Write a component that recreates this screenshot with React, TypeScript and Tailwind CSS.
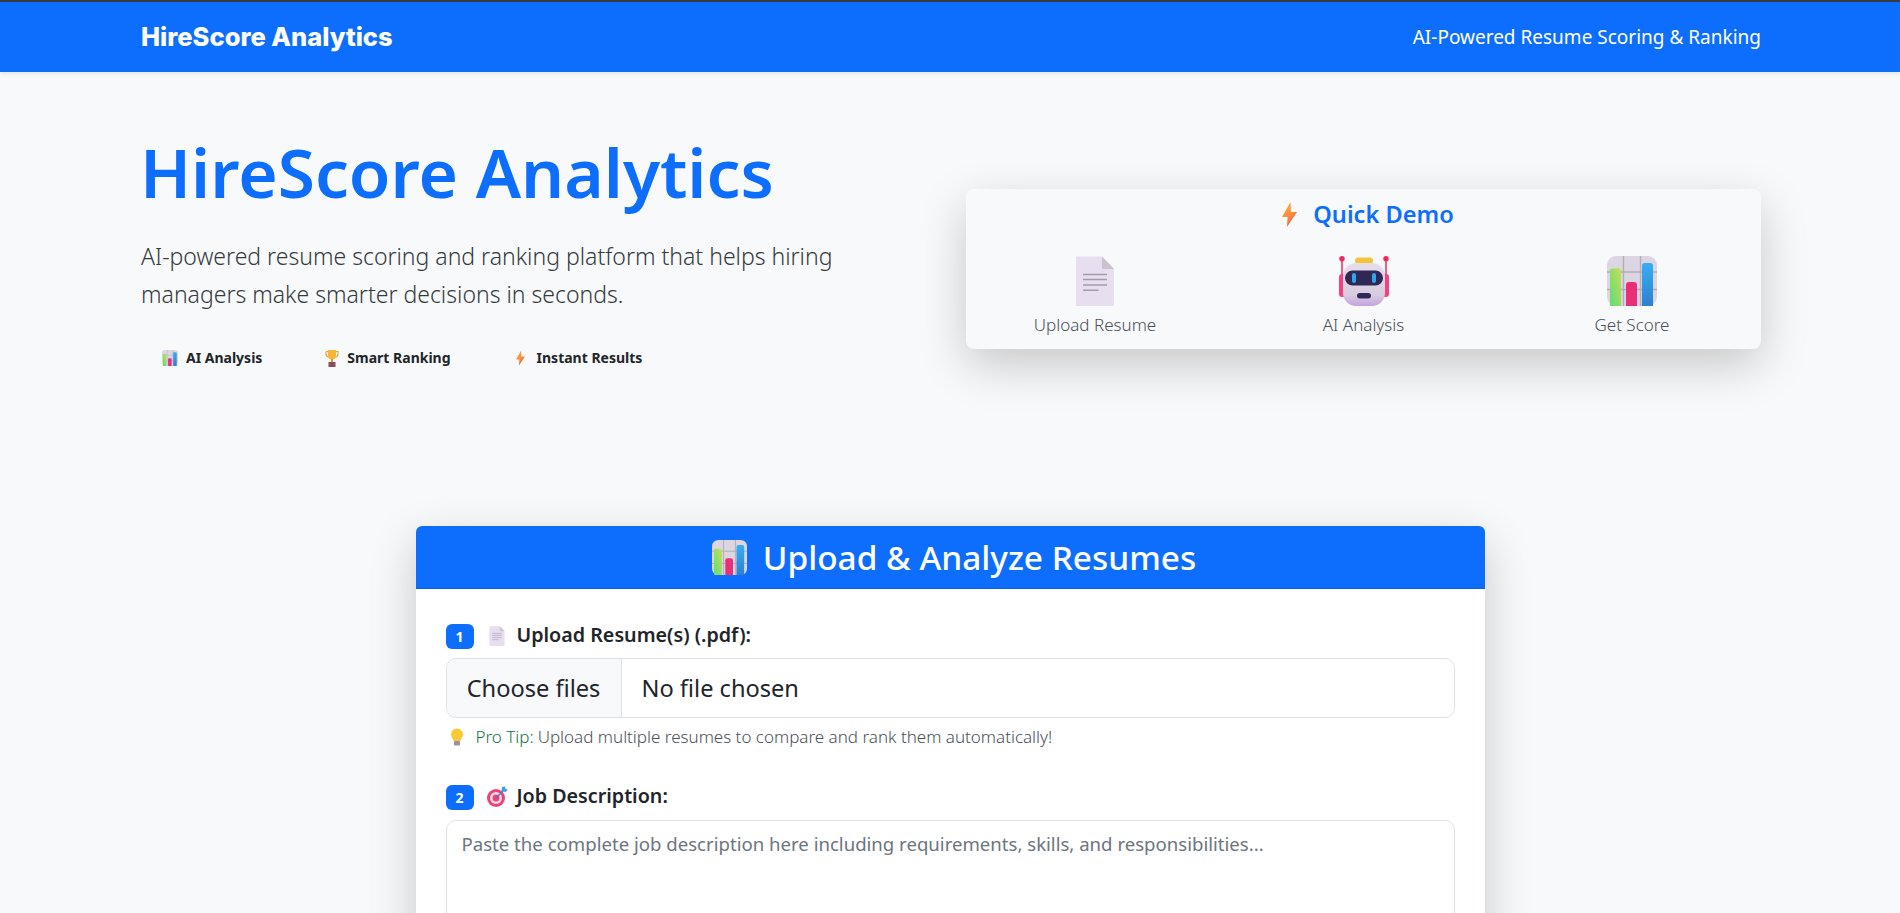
import React from "react";

const Chart = ({ s, className = "" }: { s: number; className?: string }) => (
  <svg width={s} height={s} viewBox="0 0 50 50" className={className}>
    <defs>
      <linearGradient id="cg" x1="1" y1="0" x2="0" y2="1"><stop offset="0" stopColor="#c3e052" /><stop offset="1" stopColor="#5fdc78" /></linearGradient>
      <linearGradient id="cb" x1="0" y1="0" x2="0" y2="1"><stop offset="0" stopColor="#35aef5" /><stop offset="1" stopColor="#2f7fd0" /></linearGradient>
    </defs>
    <rect width="50" height="50" rx="9" fill="#dcd6e2" />
    <path d="M16.5 0V50M33.5 0V50M0 16H50M0 33.5H50" stroke="#b3adb9" strokeWidth="1.4" />
    <path d="M3 15a2.5 2.5 0 0 1 2.5-2.5h6A2.5 2.5 0 0 1 14 15V50H3z" fill="url(#cg)" />
    <path d="M19 29a3 3 0 0 1 3-3h5a3 3 0 0 1 3 3V50H19z" fill="#e8307a" />
    <path d="M35 9.500a2.500 2.500 0 0 1 2.500-2.500h6a2.500 2.500 0 0 1 2.500 2.500V50H35z" fill="url(#cb)" />
  </svg>
);

const Doc = ({ s }: { s: number }) => (
  <svg width={s} height={s} viewBox="0 0 50 50">
    <path d="M6 .5H32L44 13V49a1 1 0 0 1-1 1H7a1 1 0 0 1-1-1z" fill="#e7deef" />
    <path d="M32 .5L44 13H33.500a1.500 1.500 0 0 1-1.500-1.500z" fill="#c9c3cf" />
    <path d="M13 18.500H37M13 23.500H37M13 29H37M13 34.200H28.500" stroke="#a39cab" strokeWidth="1.500" />
  </svg>
);

const Robot = ({ s }: { s: number }) => (
  <svg width={s} height={s} viewBox="0 0 50 50">
    <defs>
      <linearGradient id="rh" x1="0" y1="0" x2="0" y2="1"><stop offset="0" stopColor="#e5dee8" /><stop offset=".75" stopColor="#d8cbe0" /><stop offset="1" stopColor="#c5a3de" /></linearGradient>
    </defs>
    <path d="M3 3V20M47 3V20" stroke="#f0386b" strokeWidth="1.600" />
    <circle cx="3" cy="2.800" r="2.700" fill="#f0265f" />
    <circle cx="47" cy="2.800" r="2.700" fill="#f0265f" />
    <rect x="0" y="18" width="8" height="23" rx="3" fill="#f5417f" />
    <rect x="42" y="18" width="8" height="23" rx="3" fill="#f5417f" />
    <rect x="16" y="1.500" width="18" height="6.500" rx="3.250" fill="#f5c33b" />
    <rect x="4" y="7" width="42" height="43" rx="13" fill="url(#rh)" />
    <rect x="6" y="14.500" width="38" height="15" rx="7.500" fill="#2f2755" />
    <rect x="13" y="17" width="4" height="10" rx="2" fill="#2ba6e6" />
    <rect x="33" y="17" width="4" height="10" rx="2" fill="#2ba6e6" />
    <rect x="18" y="37" width="14" height="5.500" rx="2.750" fill="#2f2755" />
  </svg>
);

const Bolt = ({ w, h }: { w: number; h: number }) => (
  <svg width={w} height={h} viewBox="0 0 15 25">
    <defs>
      <linearGradient id="bl" x1=".2" y1="0" x2=".8" y2="1"><stop offset="0" stopColor="#fbb03c" /><stop offset=".55" stopColor="#fa8a3e" /><stop offset="1" stopColor="#ec4450" /></linearGradient>
    </defs>
    <path d="M8.500 0L0 15H5.500L5 25L15 10H9z" fill="url(#bl)" />
  </svg>
);

const Trophy = () => (
  <svg width="14" height="18" viewBox="0 0 14 18">
    <path d="M1 2.500H13V5a3 3 0 0 1-3 3M1 2.500V5a3 3 0 0 0 3 3" fill="none" stroke="#eea52c" strokeWidth="1.200" />
    <path d="M3 1H11V6.500A4 4 0 0 1 3 6.500z" fill="#f5b53a" />
    <rect x="6" y="10" width="2" height="3" fill="#e0982a" />
    <rect x="3.500" y="13" width="7" height="5" fill="#8e4b5e" />
  </svg>
);

const Target = () => (
  <svg width="22" height="22" viewBox="0 0 22 22">
    <circle cx="10" cy="12" r="9" fill="#e9457c" />
    <circle cx="10" cy="12" r="6" fill="#f6d9e6" />
    <circle cx="10" cy="12" r="3.500" fill="#e9457c" />
    <path d="M10 12L18 4" stroke="#4f78b8" strokeWidth="1.300" />
    <path d="M16 1L15.500 5L19.500 6L22 3.500L19.500 3L19 .5z" fill="#3aa0e8" />
  </svg>
);

const Bulb = () => (
  <svg width="14" height="18" viewBox="0 0 14 18">
    <path d="M7 0.500a6 6 0 0 1 6 6c0 2.500-2 3.800-2.500 6.500h-7C3 10.300 1 9 1 6.500a6 6 0 0 1 6-6z" fill="#fbc934" />
    <rect x="4" y="13" width="6" height="4.500" rx="1" fill="#9b8fa8" />
  </svg>
);

const Pill = ({ icon, label, iw, gap }: { icon: React.ReactNode; label: string; iw: string; gap: string }) => (
  <span className={`flex items-center text-[14px] font-bold text-[#212529] ${gap}`}>
    <span className={`flex justify-center ${iw}`}>{icon}</span>
    {label}
  </span>
);

const Demo = ({ icon, label }: { icon: React.ReactNode; label: string }) => (
  <div className="flex w-[268.5px] shrink-0 flex-col items-center">
    {icon}
    <span className="mt-[7px] text-[17px] leading-[24px] font-light text-[#495057]">{label}</span>
  </div>
);

const Step = ({ n, icon, label }: { n: number; icon: React.ReactNode; label: string }) => (
  <div className="flex h-[26px] items-center text-[#212529]">
    <span className="flex h-[25px] w-[28px] items-center justify-center rounded-[6px] bg-[#0d6efd] text-[14px] font-bold text-white">{n}</span>
    <span className="ml-[12px] flex w-[22px] justify-center">{icon}</span>
    <span className="ml-[9px] pb-[2px] text-[19.7px] font-semibold">{label}</span>
  </div>
);

export default function App() {
  return (
    <div className="h-[913px] overflow-hidden bg-[#f8f9fa] font-['Noto_Sans','Open_Sans',sans-serif]">
      <nav className="relative flex h-[72px] items-center justify-between border-t-2 border-[#343a40] bg-[#0d6efd] pr-[139px] pl-[141px] shadow-[0_2px_4px_rgba(0,0,0,0.075)]">
        <span className="font-['Inter',sans-serif] text-[25.5px] font-extrabold text-white">HireScore Analytics</span>
        <span className="text-[19px] text-white">AI-Powered Resume Scoring &amp; Ranking</span>
      </nav>

      <section className="flex pr-[139px] pl-[141px]">
        <div className="w-[825px] pt-[60px]">
          <h1 className="-ml-[1px] text-[67.6px] leading-[81px] font-semibold text-[#0d6efd]">HireScore Analytics</h1>
          <p className="mt-[24px] w-[720px] text-[23px] leading-[38px] font-light text-[#343a40]">
            AI-powered resume scoring and ranking platform that helps hiring managers make smarter decisions in seconds.
          </p>
          <div className="mt-[34px] flex pl-[21px]">
            <Pill icon={<Chart s={16} />} label="AI Analysis" iw="w-[16px]" gap="gap-[8px]" />
            <span className="ml-[63px]"><Pill icon={<Trophy />} label="Smart Ranking" iw="w-[14px]" gap="gap-[8px]" /></span>
            <span className="ml-[65px]"><Pill icon={<Bolt w={9} h={16} />} label="Instant Results" iw="w-[9px]" gap="gap-[12px]" /></span>
          </div>
        </div>
        <div className="mt-[117px] h-[160px] w-[795px] rounded-[8px] bg-[#f8f9fa] shadow-[0_16px_48px_rgba(0,0,0,0.2)]">
          <div className="flex h-[67px] items-center justify-center gap-[16px] pb-[16px] pl-[9px]">
            <Bolt w={15} h={25} />
            <span className="text-[23.6px] font-semibold text-[#0d6efd]">Quick Demo</span>
          </div>
          <div className="flex justify-center">
            <Demo icon={<Doc s={50} />} label="Upload Resume" />
            <Demo icon={<Robot s={50} />} label="AI Analysis" />
            <Demo icon={<Chart s={50} />} label="Get Score" />
          </div>
        </div>
      </section>

      <main className="mx-auto mt-[158px] w-[1069px] rounded-[6px] bg-white shadow-[0_16px_48px_rgba(0,0,0,0.2)]">
        <header className="flex h-[63px] items-center justify-center gap-[16px] rounded-t-[6px] border-b border-black/10 bg-[#0d6efd] pl-[8px] text-white">
          <Chart s={35} />
          <span className="text-[33.4px] font-medium">Upload &amp; Analyze Resumes</span>
        </header>
        <div className="px-[30px] pt-[34px]">
          <Step n={1} icon={<Doc s={20} />} label="Upload Resume(s) (.pdf):" />
          <div className="mt-[9px] flex h-[60px] items-center overflow-hidden rounded-[10px] border border-[#dee2e6] bg-white text-[23.6px] text-[#212529]">
            <span className="flex h-full w-[175px] items-center justify-center border-r border-[#dee2e6] bg-[#f8f9fa] pt-[2px]">Choose files</span>
            <span className="ml-[20px] pt-[2px]">No file chosen</span>
          </div>
          <div className="mt-[7px] flex items-center text-[17px] leading-[24px] font-light text-[#495057]">
            <span className="flex w-[24px] justify-center pr-[2px]"><Bulb /></span>
            <span className="ml-[6px] text-[#157347]">Pro Tip:</span>
            <span className="ml-[4px]">Upload multiple resumes to compare and rank them automatically!</span>
          </div>
          <div className="mt-[35px]">
            <Step n={2} icon={<Target />} label="Job Description:" />
          </div>
          <div className="mt-[10px] h-[160px] rounded-[10px] border border-[#dee2e6] bg-white px-[15px] py-[9px] text-[18.6px] leading-[27px] text-[#6c757d]">
            Paste the complete job description here including requirements, skills, and responsibilities...
          </div>
        </div>
      </main>
    </div>
  );
}
